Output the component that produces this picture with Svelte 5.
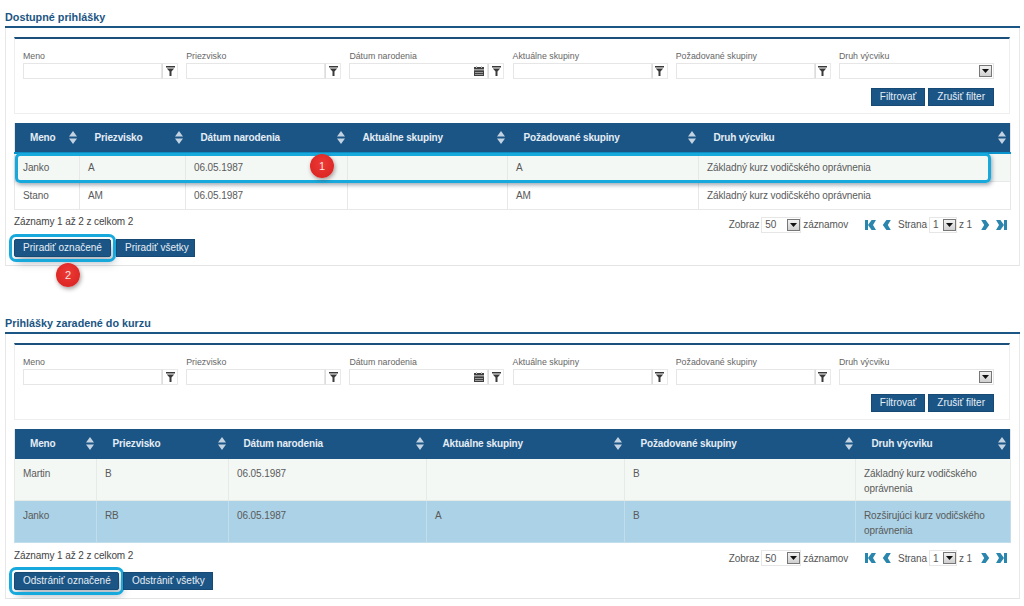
<script lang="ts">
  type Row = { cells: string[]; tone?: string };
  type Section = {
    title: string;
    widths: number[];
    insets: number[];
    rows: Row[];
    actions: { label: string; width: number }[];
    tall: boolean;
  };

  const columns = ['Meno', 'Priezvisko', 'Dátum narodenia', 'Aktuálne skupiny', 'Požadované skupiny', 'Druh výcviku'];
  const fields = columns.slice(0, 5);

  const sections: Section[] = [
    {
      title: 'Dostupné prihlášky',
      widths: [65, 106, 162, 160, 191, 312],
      insets: [15, 15, 15, 15, 16, 15],
      rows: [
        { cells: ['Janko', 'A', '06.05.1987', '', 'A', 'Základný kurz vodičského oprávnenia'], tone: 'mint' },
        { cells: ['Stano', 'AM', '06.05.1987', '', 'AM', 'Základný kurz vodičského oprávnenia'] }
      ],
      actions: [
        { label: 'Priradiť označené', width: 97 },
        { label: 'Priradiť všetky', width: 79 }
      ],
      tall: false
    },
    {
      title: 'Prihlášky zaradené do kurzu',
      widths: [82, 132, 198, 198, 231, 155],
      insets: [15, 16, 15, 16, 16, 16],
      rows: [
        { cells: ['Martin', 'B', '06.05.1987', '', 'B', 'Základný kurz vodičského oprávnenia'], tone: 'mint' },
        { cells: ['Janko', 'RB', '06.05.1987', 'A', 'B', 'Rozširujúci kurz vodičského oprávnenia'], tone: 'blue' }
      ],
      actions: [
        { label: 'Odstrániť označené', width: 105 },
        { label: 'Odstrániť všetky', width: 90 }
      ],
      tall: true
    }
  ];
</script>

{#snippet funnel()}
  <svg width="9" height="10" viewBox="0 0 9 10"><path d="M0 0h9v1.6H0zM0.8 2.6h7.4L5.5 5.6V10h-2V5.6z" fill="#3a3a3a" /></svg>
{/snippet}

{#snippet combo()}
  <span class="combo"><svg width="7" height="4" viewBox="0 0 7 4"><path d="M0 0h7L3.5 4z" fill="#111" /></svg></span>
{/snippet}

{#snippet sorter()}
  <svg class="sorter" width="8" height="13" viewBox="0 0 8 13"><path d="M4 0l4 5.5H0zM4 13L0 7.5h8z" fill="#c3d3e2" /></svg>
{/snippet}

{#snippet pagerArrow(d: string)}
  <svg width="11" height="10" viewBox="0 0 11 10"><path {d} fill="#2a86ad" /></svg>
{/snippet}

<main class="page">
  {#each sections as section, index}
    <section class="block" class:second={index === 1}>
      <h2>{section.title}</h2>
      <div class="box">
        <div class="filters">
          <div class="fields">
            {#each fields as label, i}
              <label class="field">
                <span>{label}</span>
                <span class="control">
                  <span class="input">
                    {#if i === 2}
                      <svg class="cal" width="10" height="10" viewBox="0 0 10 10"><path d="M0 1h10v2.4H0zM0 4.2h10V10H0z" fill="#3f3f3f" /><path d="M2 0h1v2H2zM7 0h1v2H7zM1 6h8v.7H1zM1 8h8v.7H1z" fill="#bbb" /></svg>
                    {/if}
                  </span>
                  <span class="funnel">{@render funnel()}</span>
                </span>
              </label>
            {/each}
            <label class="field last">
              <span>Druh výcviku</span>
              <span class="control">
                <span class="input select">{@render combo()}</span>
              </span>
            </label>
          </div>
          <div class="filter-actions">
            <button type="button" class="btn">Filtrovať</button>
            <button type="button" class="btn">Zrušiť filter</button>
          </div>
        </div>

        <div class="table-wrap">
          <table class:tall={section.tall}>
            <colgroup>
              {#each section.widths as w}<col style="width: {w}px" />{/each}
            </colgroup>
            <thead>
              <tr>
                {#each columns as col, i}
                  <th><div class="head" style="padding-left: {section.insets[i]}px">{col}{@render sorter()}</div></th>
                {/each}
              </tr>
            </thead>
            <tbody>
              {#each section.rows as row}
                <tr class={row.tone}>
                  {#each row.cells as cell}<td>{cell}</td>{/each}
                </tr>
              {/each}
            </tbody>
          </table>
          {#if index === 0}
            <div class="mark row-mark"></div>
            <span class="badge badge-one">1</span>
          {/if}
        </div>

        <div class="meta">
          <span class="count">Záznamy 1 až 2 z celkom 2</span>
          <div class="pager">
            <span>Zobraz</span>
            <span class="mini wide"><i>50</i>{@render combo()}</span>
            <span>záznamov</span>
            <span class="arrows first">
              {@render pagerArrow('M0 0h3v10H0zM6.6 0H11L8 5l3 5H6.6L3 5z')}
              {@render pagerArrow('M5.4 0h4.4l-3 5 3 5H5.4L1.8 5z')}
            </span>
            <span>Strana</span>
            <span class="mini"><i>1</i>{@render combo()}</span>
            <span>z 1</span>
            <span class="arrows">
              {@render pagerArrow('M1.2 0h4.4l3.6 5-3.6 5H1.2l3-5z')}
              {@render pagerArrow('M0 0h4.4L8 5l-3.6 5H0l3-5zM8 0h3v10H8z')}
            </span>
          </div>
        </div>

        <div class="actions">
          {#each section.actions as action, i}
            <button type="button" class="btn" class:marked={i === 0} style="width: {action.width}px">{action.label}</button>
          {/each}
          {#if index === 0}
            <span class="badge badge-two">2</span>
          {/if}
        </div>
      </div>
    </section>
  {/each}
</main>

<style>
  :global(body) {
    margin: 0;
    background: #fff;
  }

  .page {
    width: 1015px;
    padding: 11px 0 0 5px;
    font-family: 'Liberation Sans', Arial, sans-serif;
    font-size: 10px;
    letter-spacing: -0.1px;
    color: #555;
  }

  .block.second {
    margin-top: 51px;
  }

  h2 {
    margin: 0;
    height: 15px;
    font-size: 10.8px;
    letter-spacing: 0;
    line-height: 13px;
    font-weight: bold;
    color: #1b5583;
    border-bottom: 2px solid #1b5583;
  }

  .box {
    box-sizing: border-box;
    padding: 9px 9px 8px 8px;
    border-left: 1px solid #e8e8e8;
    border-bottom: 1px solid #e4e4e4;
    border-right: 1px solid #e8e8e8;
  }

  .filters {
    box-sizing: border-box;
    height: 77px;
    padding: 12px 15px 0 8px;
    border: 1px solid #eee;
    border-top: 2px solid #1b4f7c;
  }

  .fields {
    display: grid;
    grid-template-columns: repeat(6, 155px);
    column-gap: 8.2px;
  }

  .field {
    display: flex;
    flex-direction: column;
    font-size: 8.8px;
    letter-spacing: 0;
    line-height: 11px;
    color: #666;
  }

  .control {
    display: flex;
    height: 16px;
    margin-top: 1px;
  }

  .input {
    box-sizing: border-box;
    flex: 1;
    display: flex;
    align-items: center;
    justify-content: flex-end;
    padding-right: 3px;
    border: 1px solid #e6e6e6;
  }

  .select {
    padding-right: 1px;
  }

  .funnel {
    box-sizing: border-box;
    width: 16px;
    display: flex;
    align-items: center;
    justify-content: center;
    border: 1px solid #e9e9e9;
    border-left: 1px solid #ddd;
  }

  .combo {
    box-sizing: border-box;
    display: inline-flex;
    align-items: center;
    justify-content: center;
    width: 13px;
    height: 12px;
    background: linear-gradient(#f2f2f2, #cfcfcf);
    border: 1px solid #777;
  }

  .filter-actions {
    display: flex;
    justify-content: flex-end;
    gap: 3px;
    margin-top: 9px;
  }

  .btn {
    box-sizing: border-box;
    height: 18px;
    padding: 0 8px;
    font-family: inherit;
    font-size: 10px;
    line-height: 16px;
    color: #e6eef5;
    background: #1b5585;
    border: 1px solid #164a75;
    white-space: nowrap;
  }

  .table-wrap {
    position: relative;
    margin-top: 9px;
  }

  table {
    width: 996px;
    table-layout: fixed;
    border-collapse: collapse;
    border: 1px solid #e6e6e6;
    border-top: 0;
  }

  th {
    height: 29px;
    padding: 0;
    background: #1b5585;
    border-bottom: 2px solid #0a94cd;
    color: #e4edf5;
    text-align: left;
    font-size: 10px;
    letter-spacing: -0.15px;
  }

  .tall th {
    height: 30px;
    border-bottom: 0;
  }

  .head {
    display: flex;
    align-items: center;
    justify-content: space-between;
    padding-right: 3px;
  }

  th:last-child .head {
    padding-right: 4px;
  }

  .sorter {
    flex: none;
  }

  td {
    height: 28px;
    box-sizing: border-box;
    padding: 0 8px;
    border: 1px solid #e8e8e8;
    border-top: 0;
    line-height: 15px;
    color: #5a5a5a;
  }

  .tall td {
    height: 42px;
    padding-top: 7px;
    padding-bottom: 4px;
    vertical-align: top;
    border-color: #e6ebe8;
  }

  .mint td {
    background: #f4f8f5;
  }

  .blue td {
    background: #abd2e6;
    border-color: #c3deeb;
  }

  .mark {
    position: absolute;
    box-sizing: border-box;
    border: 3px solid #18a9dc;
    border-radius: 5px;
    box-shadow: 1px 2px 4px rgba(40, 60, 80, 0.45);
    pointer-events: none;
  }

  .row-mark {
    left: 1px;
    top: 30px;
    width: 976px;
    height: 30px;
  }

  .badge {
    position: absolute;
    width: 24px;
    height: 24px;
    border-radius: 50%;
    background: radial-gradient(circle at 50% 40%, #ee3a36, #d5201f);
    box-shadow: 1px 2px 4px rgba(60, 40, 40, 0.45);
    color: #fbe4e0;
    font-size: 11px;
    line-height: 24px;
    text-align: center;
  }

  .badge-one {
    left: 296px;
    top: 31px;
  }

  .badge-two {
    left: 42px;
    top: 24px;
  }

  .meta {
    display: flex;
    justify-content: space-between;
    align-items: flex-start;
    height: 19px;
    margin-top: 6px;
    padding-right: 3px;
  }

  .second .meta {
    margin-top: 7px;
  }

  .count {
    color: #444;
  }

  .pager {
    display: flex;
    align-items: center;
    gap: 2px;
    margin-top: 1px;
    color: #555;
  }

  .second .pager {
    margin-top: 0;
  }

  .mini {
    display: inline-flex;
    align-items: center;
    justify-content: space-between;
    box-sizing: border-box;
    width: 28px;
    height: 16px;
    border: 1px solid #e6e6e6;
    padding-left: 3px;
  }

  .mini.wide {
    width: 40px;
  }

  .mini i {
    font-style: normal;
  }

  .arrows {
    display: inline-flex;
    gap: 5px;
    margin-left: 6px;
  }

  .arrows.first {
    margin-left: 15px;
    margin-right: 4px;
  }

  .actions {
    position: relative;
    display: flex;
    gap: 5px;
    margin-top: 4px;
  }

  .second .actions {
    gap: 4px;
    margin-top: 3px;
  }

  .btn.marked {
    outline: 3px solid #18a9dc;
    outline-offset: 2px;
    border-radius: 2px;
    box-shadow: 3px 6px 8px rgba(40, 60, 80, 0.35);
  }
</style>
